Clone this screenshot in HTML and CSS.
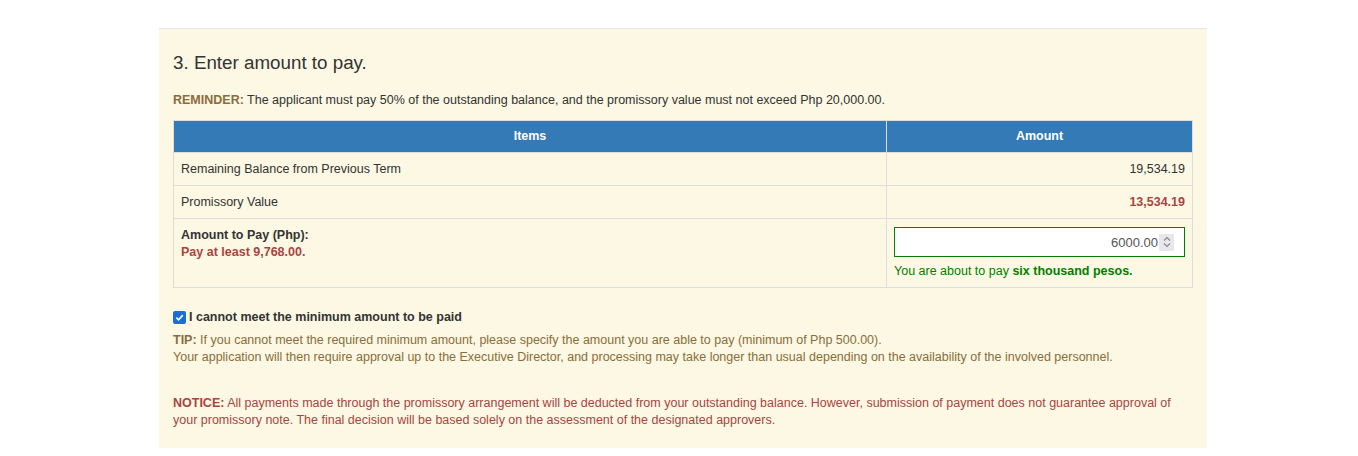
FILE: index.html
```html
<!DOCTYPE html>
<html lang="en">
<head>
    <meta charset="UTF-8">
    <meta name="viewport" content="width=device-width, initial-scale=1.0">
    <link rel="stylesheet" href="styles.css">
    <title>Promissory Payment</title>
</head>
<body>
    <div class="panel">
        <h3 class="step">3. Enter amount to pay.</h3>
        <p class="reminder"><b>REMINDER:</b> The applicant must pay 50% of the outstanding balance, and the promissory value must not exceed Php 20,000.00.</p>
        <table class="items">
            <thead>
                <tr>
                    <th class="col-item">Items</th>
                    <th class="col-amount">Amount</th>
                </tr>
            </thead>
            <tbody>
                <tr>
                    <td>Remaining Balance from Previous Term</td>
                    <td class="num">19,534.19</td>
                </tr>
                <tr>
                    <td>Promissory Value</td>
                    <td class="num danger"><b>13,534.19</b></td>
                </tr>
                <tr>
                    <td>
                        <b>Amount to Pay (Php):</b><br>
                        <b class="danger">Pay at least 9,768.00.</b>
                    </td>
                    <td>
                        <div class="amount-box">
                            <span class="amount-value">6000.00</span>
                            <span class="spinner">
                                <svg width="8" height="12" viewBox="0 0 8 12"><path d="M1 4.5 L4 1.5 L7 4.5 M1 7.5 L4 10.5 L7 7.5" fill="none" stroke="#8a8a8a" stroke-width="1.1"/></svg>
                            </span>
                        </div>
                        <div class="words">You are about to pay <b>six thousand pesos.</b></div>
                    </td>
                </tr>
            </tbody>
        </table>

        <label class="check">
            <span class="box">
                <svg width="9" height="9" viewBox="0 0 10 10"><path d="M1.5 5.2 L4 7.6 L8.6 2.4" fill="none" stroke="#fff" stroke-width="1.8"/></svg>
            </span>
            I cannot meet the minimum amount to be paid
        </label>
        <p class="tip"><b>TIP:</b> If you cannot meet the required minimum amount, please specify the amount you are able to pay (minimum of Php 500.00).<br>
        Your application will then require approval up to the Executive Director, and processing may take longer than usual depending on the availability of the involved personnel.</p>

        <p class="notice"><b>NOTICE:</b> All payments made through the promissory arrangement will be deducted from your outstanding balance. However, submission of payment does not guarantee approval of your promissory note. The final decision will be based solely on the assessment of the designated approvers.</p>
    </div>
</body>
</html>
```

FILE: styles.css
```css
*{
    margin: 0;
    padding: 0;
    box-sizing: border-box;
}

body{
    background: #fff;
    font-family: "Liberation Sans", Arial, sans-serif;
    font-size: 12.5px;
    line-height: 17px;
    color: #333;
    padding-top: 28px;
}

.panel{
    width: 1048px;
    margin-left: 159px;
    background: #fcf8e3;
    border-top: 1px solid #e5e5e5;
    padding: 23px 14px 19px;
}

.step{
    font-size: 18.8px;
    font-weight: normal;
    line-height: 22px;
    margin-bottom: 18px;
}

.reminder{
    margin-bottom: 11px;
}
.reminder b{
    color: #8a6d3b;
}

.items{
    width: 100%;
    border-collapse: collapse;
}
.items th{
    background: #337ab7;
    color: #fff;
    font-weight: bold;
    text-align: center;
    height: 32px;
    border: 1px solid #ddd;
    border-bottom: none;
}
.items .col-item{
    width: 713px;
}
.items td{
    padding: 8px 7px 7px;
    border: 1px solid #ddd;
    vertical-align: top;
}
.items td.num{
    text-align: right;
}
.danger{
    color: #a94442;
}

.amount-box{
    height: 30px;
    background: #fff;
    border: 1px solid #008000;
    display: flex;
    align-items: center;
    justify-content: flex-end;
    padding-right: 10px;
    font-size: 13px;
    color: #555;
}
.spinner{
    width: 15px;
    height: 17px;
    background: #e8e8ec;
    display: flex;
    align-items: center;
    justify-content: center;
    margin-left: 1px;
}
.words{
    color: #008000;
    margin-top: 6px;
}

.check{
    display: flex;
    align-items: center;
    font-weight: bold;
    margin-top: 21px;
    margin-bottom: 6px;
}
.check .box{
    width: 13px;
    height: 13px;
    background: #1a6ed8;
    border-radius: 2px;
    display: flex;
    align-items: center;
    justify-content: center;
    margin-right: 3px;
}

.tip{
    color: #8a6d3b;
    margin-bottom: 29px;
}
.notice{
    color: #a94442;
}
```
